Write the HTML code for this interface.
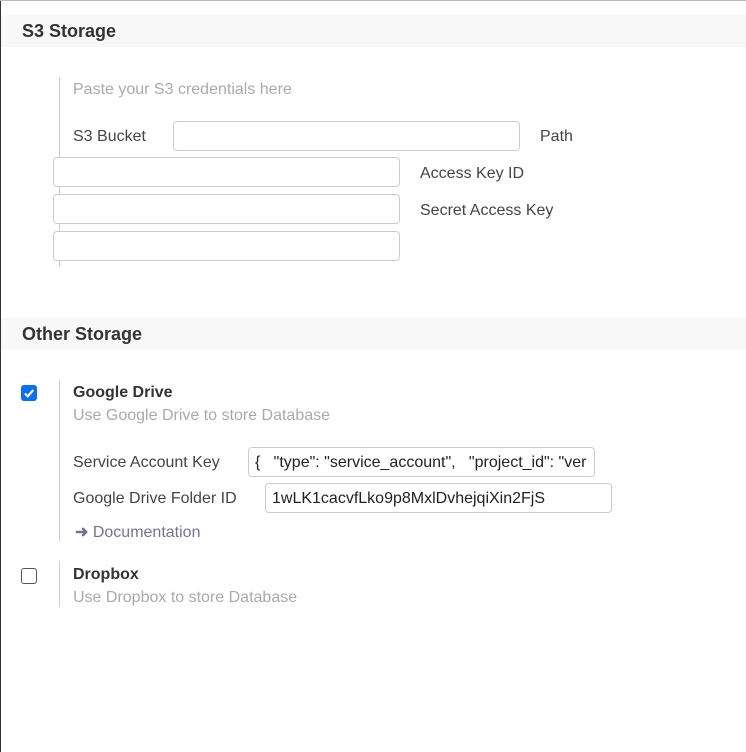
<!DOCTYPE html>
<html><head><style>
body{margin:0;width:746px;height:752px;position:relative;overflow:hidden;font-family:"Liberation Sans",sans-serif;font-size:16px;color:#444;background:#fff}
.a{position:absolute;white-space:nowrap}
.h{position:absolute;left:1px;right:0;height:32px;background:#f8f8f8}
.h span{position:absolute;left:21px;top:6px;font-weight:bold;font-size:18px;color:#333}
.in{position:absolute;border:1px solid #ccc;border-radius:4px;box-sizing:border-box;background:#fff;overflow:hidden;white-space:nowrap;font-size:16px;color:#222;padding:5px 6px;line-height:20px}
.vl{position:absolute;left:59px;width:1px;background:#ccc}
.g{color:#aaa}
</style></head><body>
<div class="a" style="left:0;top:0;width:1px;height:752px;background:#333"></div>
<div class="a" style="left:0;top:0;width:746px;height:1px;background:#bbb"></div>
<div class="h" style="top:15px"><span>S3 Storage</span></div>
<div class="vl" style="top:77px;height:190px"></div>
<div class="a g" style="left:73px;top:81px">Paste your S3 credentials here</div>
<div class="a" style="left:73px;top:128px">S3 Bucket</div>
<div class="in" style="left:173px;top:121px;width:347px;height:30px"></div>
<div class="a" style="left:540px;top:128px">Path</div>
<div class="in" style="left:53px;top:157px;width:347px;height:30px"></div>
<div class="a" style="left:420px;top:165px">Access Key ID</div>
<div class="in" style="left:53px;top:194px;width:347px;height:30px"></div>
<div class="a" style="left:420px;top:202px">Secret Access Key</div>
<div class="in" style="left:53px;top:231px;width:347px;height:30px"></div>
<div class="h" style="top:318px"><span>Other Storage</span></div>
<div class="a" style="left:21px;top:385px;width:16px;height:16px;background:#0b6ef6;border-radius:3px"><svg width="16" height="16"><path d="M4 8.5l2.8 2.8L12.2 5" stroke="#fff" stroke-width="2.2" fill="none"/></svg></div>
<div class="vl" style="top:380px;height:161px"></div>
<div class="a" style="left:73px;top:384px;font-weight:bold;color:#333">Google Drive</div>
<div class="a g" style="left:73px;top:407px">Use Google Drive to store Database</div>
<div class="a" style="left:73px;top:454px">Service Account Key</div>
<div class="in" style="left:248px;top:447px;width:347px;height:30px">{ &nbsp; "type": "service_account", &nbsp; "project_id": "ver</div>
<div class="a" style="left:73px;top:490px">Google Drive Folder ID</div>
<div class="in" style="left:265px;top:483px;width:347px;height:30px">1wLK1cacvfLko9p8MxlDvhejqiXin2FjS</div>
<div class="a" style="left:75px;top:522px;color:#7c6f95"><b>&#10140;</b> Documentation</div>
<div class="a" style="left:21px;top:568px;width:14px;height:14px;border:1px solid #555;border-radius:3px"></div>
<div class="vl" style="top:561px;height:46px"></div>
<div class="a" style="left:73px;top:566px;font-weight:bold;color:#333">Dropbox</div>
<div class="a g" style="left:73px;top:589px">Use Dropbox to store Database</div>
</body></html>
